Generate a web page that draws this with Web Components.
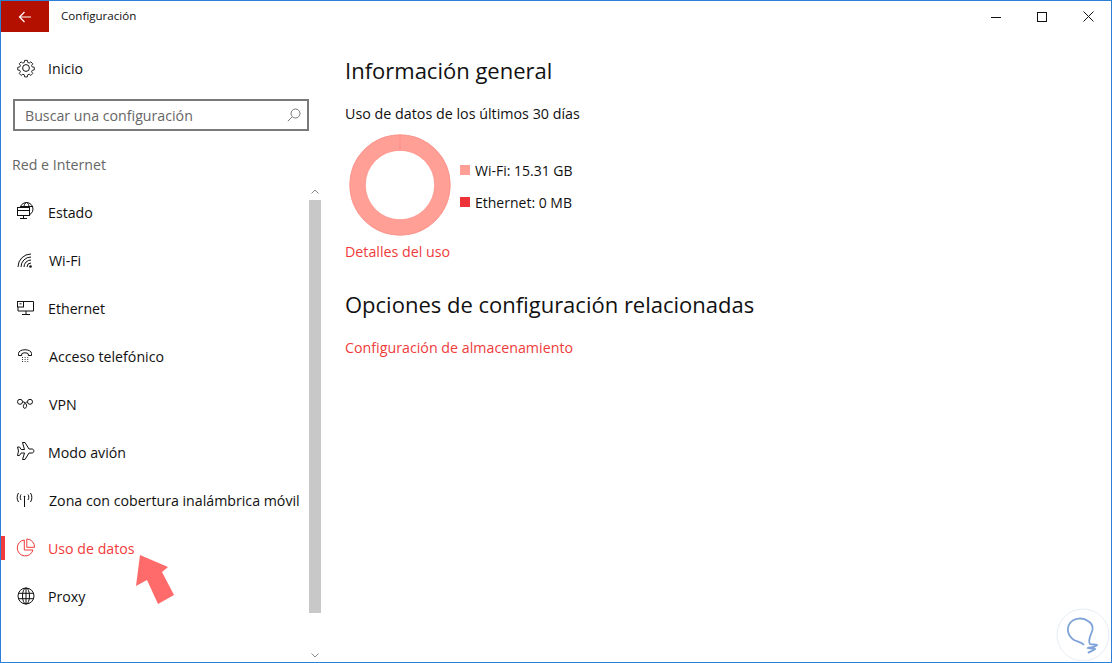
<!DOCTYPE html>
<html lang="es">
<head>
<meta charset="utf-8">
<title>Configuración</title>
<style>
    html, body { margin: 0; height: 100%; background: #fff; overflow: hidden; }
    body { font-family: "Open Sans", "Noto Sans", sans-serif; }
</style>
</head>
<body>
<settings-window>
    <title-bar slot="top" heading="Configuración"></title-bar>
    <settings-nav slot="nav"></settings-nav>
    <data-usage slot="main"></data-usage>
</settings-window>

<script>
const ICONS = {
    gear: '<circle cx="10" cy="10" r="3.4"/><path d="M8.5 1.5h3l.4 2.3 1.6.7 1.9-1.3 2.1 2.1-1.3 1.9.7 1.6 2.3.4v3l-2.3.4-.7 1.6 1.3 1.9-2.1 2.1-1.9-1.3-1.6.7-.4 2.3h-3l-.4-2.3-1.6-.7-1.9 1.3-2.1-2.1 1.3-1.9-.7-1.6-2.3-.4v-3l2.3-.4.7-1.6-1.3-1.9 2.1-2.1 1.9 1.3 1.6-.7z" transform="translate(1 1) scale(.9)"/>',
    status: '<g transform="translate(0 -.5)"><circle cx="10.500" cy="7.500" r="6.500"/><ellipse cx="10.500" cy="7.500" rx="2.800" ry="6.500"/><path d="M4 5h13"/><rect x="1.500" y="6" width="12" height="8" fill="#fff"/><path d="M1.500 9h12M7.500 14v3M4 17h7"/></g>',
    wifi: '<path d="M2 17A13 13 0 0 1 15 4M5 17A10 10 0 0 1 15 7M8 17a7 7 0 0 1 7-7M11 17a4 4 0 0 1 4-4"/><circle cx="14.500" cy="16.500" r="1.300" fill="currentColor" stroke="none"/>',
    ethernet: '<path d="M7.500 3.500h10v9.500H2V9"/><rect x="1.500" y="3.500" width="6" height="5.500"/><path d="M3.500 5.800h2M10 13v3M6 16.500h8"/>',
    phone: '<path d="M2.500 9.500V7.500C2.500 2.500 15.500 2.500 15.500 7.500v2h-3.200V7.800c-1-1.300-5.600-1.300-6.600 0v1.700z"/><path d="M6 11.500h.8M8.700 11.500h.8M11.400 11.500h.8M6 13.500h.8M8.700 13.500h.8M11.400 13.500h.8M6 15.500h.8M8.700 15.500h.8M11.400 15.500h.8"/>',
    vpn: '<circle cx="4" cy="7.800" r="2.500"/><circle cx="14" cy="7.800" r="2.500"/><path d="M6.500 7.800c2.300 0 3.300 1.400 4 3.200 1 3.200-3 4.500-3.200 1.800C7.200 10.500 9.300 9 10 8.500c.8-.6 1.500-.7 1.500-.7"/>',
    plane: '<path transform="translate(0 -1)" d="M1.500 6h2l1.700 2.500h3.300L6.500 1.500H9l4 6.500h3c2.500 0 2.500 4 0 4h-3l-4 6.500H6.500l2-6.500H5.200L3.500 14.500h-2l1-4.500z"/>',
    hotspot: '<path d="M8.500 7v10"/><circle cx="8.500" cy="6.500" r=".8" fill="currentColor" stroke="none"/><path d="M5 10c-1-1.500-1-4 0-5.500M12 10c1-1.500 1-4 0-5.500M2.500 12c-1.800-2.500-1.800-6.500 0-9M14.500 12c1.800-2.500 1.800-6.500 0-9"/>',
    pie: '<path d="M8.300 2A8 8 0 1 0 17 12H8.300z"/><path d="M10.800 1v8.300H18.500A7.800 7.800 0 0 0 10.800 1z"/>',
    globe: '<circle cx="10" cy="10" r="8"/><ellipse cx="10" cy="10" rx="3.500" ry="8"/><path d="M10 2v16M2.500 7.300h15M2.500 12.700h15"/>'
};

function icon(name, size = 20) {
    return `<svg width="${size}" height="${size}" viewBox="0 0 20 20" fill="none" stroke="currentColor" stroke-width="1" aria-hidden="true">${ICONS[name]}</svg>`;
}

class SettingsWindow extends HTMLElement {
    constructor() {
        super();
        this.attachShadow({ mode: 'open' });
        this.shadowRoot.innerHTML = `
            <style>
                :host {
                    display: grid;
                    grid-template-columns: 321px 1fr;
                    grid-template-rows: 31px 1fr;
                    box-sizing: border-box;
                    width: 1112px;
                    height: 663px;
                    border: 1px solid #2b7fd6;
                    background: #fff;
                    overflow: hidden;
                    position: relative;
                }
                ::slotted([slot="top"]) { grid-column: 1 / 3; }
                .mark { position: absolute; right: 1px; bottom: 1px; }
            </style>
            <slot name="top"></slot>
            <slot name="nav"></slot>
            <slot name="main"></slot>
            <svg class="mark" width="56" height="54" viewBox="0 0 56 54" fill="none">
                <circle cx="29" cy="28" r="26" stroke="#e6edf6" stroke-width="1"/>
                <path d="M30 38c-2-3-6-3-10-5-6-4-8-11-4-17 4-5 13-6 18-2 5 3 6 8 3 13-1 3-3 7-1 10 2 1 5 0 7 1-2 3-8 2-9 3 3 1 6 0 7 1-2 2-6 3-7 4" stroke="#7ea3d8" stroke-width="1.800"/>
            </svg>
        `;
    }
}

class TitleBar extends HTMLElement {
    constructor() {
        super();
        this.attachShadow({ mode: 'open' });
        this.shadowRoot.innerHTML = `
            <style>
                :host { display: flex; align-items: stretch; height: 31px; }
                .back {
                    width: 48px;
                    display: flex;
                    align-items: center;
                    justify-content: center;
                    background: #b31000;
                    color: #fff;
                }
                .title {
                    flex: 1;
                    margin-left: 12px;
                    font-size: 11.600px;
                    line-height: 29px;
                    color: #111;
                }
                .btns { display: flex; }
                .btn {
                    width: 46px;
                    display: flex;
                    align-items: center;
                    justify-content: center;
                }
            </style>
            <div class="back">
                <svg width="14" height="12" viewBox="0 0 14 12" fill="none" stroke="#fff" stroke-width="1.200"><path d="M13 6H1.500M6.500 1l-5 5 5 5"/></svg>
            </div>
            <div class="title">${this.getAttribute('heading')}</div>
            <div class="btns">
                <div class="btn"><svg width="10" height="10" fill="none" stroke="#111"><path d="M0 5.500h10"/></svg></div>
                <div class="btn"><svg width="10" height="10" fill="none" stroke="#111"><rect x=".5" y=".5" width="9" height="9"/></svg></div>
                <div class="btn"><svg width="11" height="11" fill="none" stroke="#111"><path d="M.5.500l10 10M10.500.500l-10 10"/></svg></div>
            </div>
        `;
    }
}

class NavItem extends HTMLElement {
    constructor() {
        super();
        this.attachShadow({ mode: 'open' });
        const active = this.hasAttribute('active');
        const gap = this.hasAttribute('nudge') ? 13 : 12;
        this.shadowRoot.innerHTML = `
            <style>
                :host {
                    display: flex;
                    align-items: center;
                    position: relative;
                    height: 48px;
                    padding-left: 15px;
                    color: ${active ? '#ef3b3b' : '#111'};
                    font-size: 14.200px;
                }
                .ico { width: 20px; height: 20px; margin-right: ${gap}px; flex: none; }
                .bar {
                    position: absolute;
                    left: 0;
                    top: 12px;
                    width: 4px;
                    height: 24px;
                    background: #ef3b3b;
                }
            </style>
            ${active ? '<div class="bar"></div>' : ''}
            <div class="ico">${icon(this.getAttribute('icon'))}</div>
            <slot></slot>
        `;
    }
}

class SearchBox extends HTMLElement {
    constructor() {
        super();
        this.attachShadow({ mode: 'open' });
        this.shadowRoot.innerHTML = `
            <style>
                :host {
                    display: flex;
                    align-items: center;
                    justify-content: space-between;
                    box-sizing: border-box;
                    width: 296px;
                    height: 32px;
                    margin-left: 12px;
                    padding: 0 6px 0 10px;
                    border: 2px solid #7a7a7a;
                    color: #666;
                    font-size: 14.200px;
                }
            </style>
            <slot></slot>
            <svg width="14" height="14" viewBox="0 0 14 14" fill="none" stroke="#777"><circle cx="8.500" cy="5.500" r="4.500"/><path d="M5.200 8.800L.8 13.200"/></svg>
        `;
    }
}

class SettingsNav extends HTMLElement {
    constructor() {
        super();
        this.attachShadow({ mode: 'open' });
        this.shadowRoot.innerHTML = `
            <style>
                :host { display: flex; flex-direction: column; position: relative; min-height: 0; }
                .home { margin-top: 12px; margin-bottom: 7px; }
                .section {
                    margin: 24px 0 0 11px;
                    height: 20px;
                    line-height: 20px;
                    font-size: 14.200px;
                    color: #666;
                }
                .list { margin-top: 13px; display: flex; flex-direction: column; }
                .track {
                    position: absolute;
                    top: 156px;
                    right: 1px;
                    bottom: 0;
                    width: 12px;
                    color: #888;
                }
                .thumb {
                    position: absolute;
                    top: 12px;
                    left: 0;
                    width: 12px;
                    height: 413px;
                    background: #c8c8c8;
                }
                .arrow { position: absolute; left: 2px; }
                .pointer { position: absolute; left: 134px; top: 522px; }
            </style>
            <nav-item class="home" icon="gear">Inicio</nav-item>
            <search-box>Buscar una configuración</search-box>
            <div class="section">Red e Internet</div>
            <div class="list">
                <nav-item icon="status">Estado</nav-item>
                <nav-item icon="wifi" nudge>Wi-Fi</nav-item>
                <nav-item icon="ethernet">Ethernet</nav-item>
                <nav-item icon="phone" nudge>Acceso telefónico</nav-item>
                <nav-item icon="vpn" nudge>VPN</nav-item>
                <nav-item icon="plane">Modo avión</nav-item>
                <nav-item icon="hotspot" nudge>Zona con cobertura inalámbrica móvil</nav-item>
                <nav-item icon="pie" active>Uso de datos</nav-item>
                <nav-item icon="globe">Proxy</nav-item>
            </div>
            <div class="track">
                <svg class="arrow" style="top:1px" width="8" height="5" fill="none" stroke="#888"><path d="M.5 4.500L4 1l3.500 3.500"/></svg>
                <div class="thumb"></div>
                <svg class="arrow" style="bottom:4px" width="8" height="5" fill="none" stroke="#888"><path d="M.5.500L4 4l3.500-3.500"/></svg>
            </div>
            <svg class="pointer" width="42" height="52" viewBox="0 0 42 52"><path d="M5 1l28 12-6 5 12 23-16 9-11-24-11 6z" fill="#ff6a6a"/></svg>
        `;
    }
}

class LegendItem extends HTMLElement {
    constructor() {
        super();
        this.attachShadow({ mode: 'open' });
        this.shadowRoot.innerHTML = `
            <style>
                :host { display: flex; align-items: center; gap: 5px; font-size: 14px; color: #111; height: 20px; }
                i { width: 10px; height: 10px; background: ${this.getAttribute('color')}; }
            </style>
            <i></i><slot></slot>
        `;
    }
}

class DataUsage extends HTMLElement {
    constructor() {
        super();
        this.attachShadow({ mode: 'open' });
        this.shadowRoot.innerHTML = `
            <style>
                :host { display: block; padding: 20px 0 0 23px; color: #111; }
                h2 { margin: 0; font-size: 22px; font-weight: 400; line-height: 36px; }
                p { margin: 16px 0 0; font-size: 14.300px; line-height: 20px; }
                a { display: block; color: #ef3b3b; font-size: 14.250px; line-height: 20px; }
                .chart { display: flex; align-items: center; margin-top: 9px; height: 104px; }
                .legend { display: flex; flex-direction: column; gap: 12px; margin: 2px 0 0 8px; }
                .details { margin-top: 5px; }
                .related { margin-top: 24px; }
                .storage { margin-top: 16px; }
            </style>
            <h2>Información general</h2>
            <p>Uso de datos de los últimos 30 días</p>
            <div class="chart">
                <svg width="104" height="104" viewBox="0 0 104 104" fill="none" style="margin-left:3px">
                    <circle cx="52" cy="52" r="42.500" stroke="#ff9f96" stroke-width="16"/>
                    <circle cx="52" cy="52" r="50.200" stroke="#fb8f86" stroke-width=".6"/>
                    <circle cx="52" cy="52" r="34.700" stroke="#fb8f86" stroke-width=".6"/>
                    <path d="M52 2v15.500" stroke="#fb8f86"/>
                </svg>
                <div class="legend">
                    <legend-item color="#ff9f96">Wi-Fi: 15.31 GB</legend-item>
                    <legend-item color="#ee3338">Ethernet: 0 MB</legend-item>
                </div>
            </div>
            <a class="details">Detalles del uso</a>
            <h2 class="related">Opciones de configuración relacionadas</h2>
            <a class="storage">Configuración de almacenamiento</a>
        `;
    }
}

customElements.define('settings-window', SettingsWindow);
customElements.define('title-bar', TitleBar);
customElements.define('nav-item', NavItem);
customElements.define('search-box', SearchBox);
customElements.define('settings-nav', SettingsNav);
customElements.define('legend-item', LegendItem);
customElements.define('data-usage', DataUsage);
</script>
</body>
</html>
